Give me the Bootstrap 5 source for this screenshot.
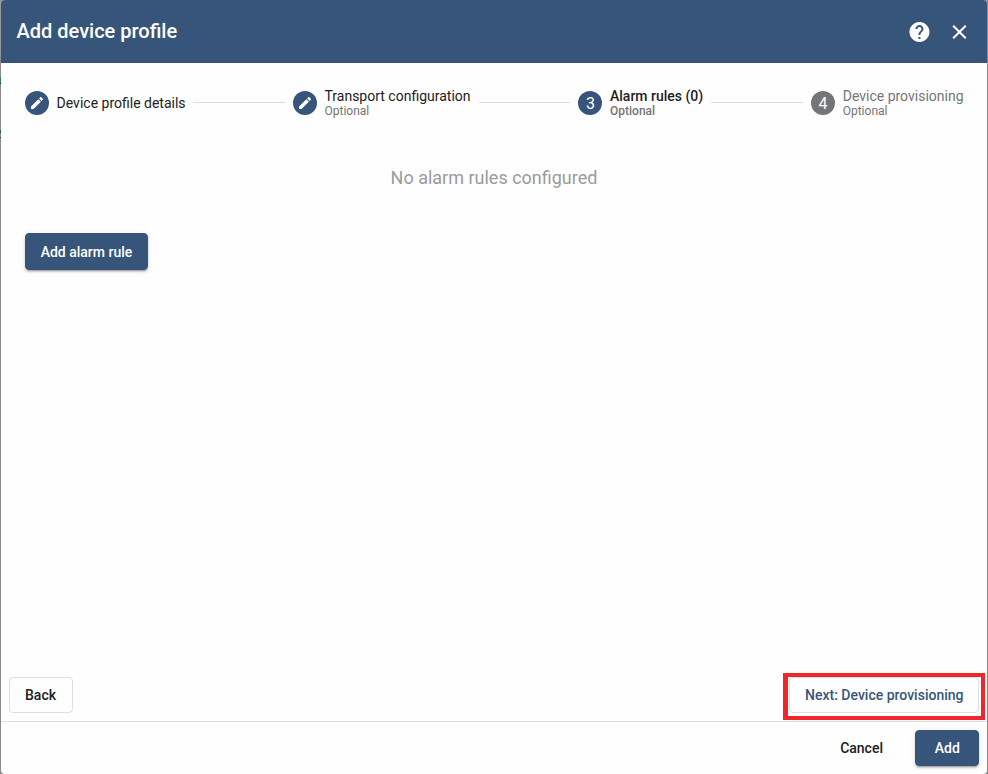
<!DOCTYPE html>
<html lang="en">
<head>
<meta charset="utf-8">
<meta name="viewport" content="width=device-width, initial-scale=1">
<title>Add device profile</title>
<link href="https://cdn.jsdelivr.net/npm/bootstrap@5.3.0/dist/css/bootstrap.min.css" rel="stylesheet">
<style>
  body { font-family: Roboto, "Liberation Sans", sans-serif; color: #212121; font-size: 14px;
    background: linear-gradient(#9a9a9a 0 55px, #8a8a8a 55px 77px, #347b85 77px 83px, #14292c 83px 84px, #8a8a8a 84px 130px, #23568a 130px 133px, #8a8a8a 133px 137px, #333 137px 138px, #8a8a8a 138px) 0 0 / 1px 100% no-repeat #8a8a8a; }
  .dialog { margin: 0 1px; border-radius: 4px; background: #fefefe; overflow: hidden; }
  .dialog-head { height: 63px; background: #37557b; padding: 0 16px 0 15.5px; }
  .dialog-head h1 { font-size: 20px; line-height: 32px; margin-top: -1px; }
  .medium, .dialog-head h1 { font-weight: 500; }
  .head-icons { gap: 16px; }
  .head-icons .btn { line-height: 0; }
  .head-icons svg { transform: translateX(.45px); }
  .stepper { height: 78px; padding: 2px 23.5px 0 24px; }
  .step-dot { width: 24px; height: 24px; background: #37557b; color: #fff; font-size: 16px; line-height: 24px; margin-right: 7.6px; }
  .step-num { padding-top: 1px; }
  .step-dot.idle { background: #757575; }
  .step-name { line-height: 16px; white-space: nowrap; }
  .step-note { font-size: 12px; line-height: 14px; color: #757575; }
  .step-text { margin-bottom: 1px; }
  .muted-name { color: #757575; }
  .step-line { height: 1px; background: #dedede; margin: -1px 8px 0; }
  .step-line.first { margin-left: 7.4px; }
  .empty-note { font-size: 18px; line-height: 27px; color: #9b9b9b; margin-top: 23px; }
  .btn-app { --bs-btn-font-size: 14px; --bs-btn-font-weight: 500; --bs-btn-border-radius: 4px; --bs-btn-padding-y: 0; --bs-btn-padding-x: 15px; --bs-btn-color: #212121; height: 36px; line-height: 34px; white-space: nowrap; }
  .btn-main { --bs-btn-color: #fff; --bs-btn-bg: #37557b; --bs-btn-border-color: #37557b; box-shadow: 0 3px 1px -2px rgba(0,0,0,.2), 0 2px 2px rgba(0,0,0,.14), 0 1px 5px rgba(0,0,0,.12); }
  .btn-line { --bs-btn-border-color: #dedede; }
  .btn-back { width: 64px; padding-left: 14px; }
  .btn-next { --bs-btn-color: #37557b; padding-left: 15.5px; padding-right: 14.5px; }
  .btn-cancel { margin-right: 1px; }
  .btn-add { width: 64px; padding-left: 15.5px; }
  .add-rule { height: 37px; margin: 42px 0 0 24px; width: 123px; line-height: 35px; padding: 1px 14.6px 0; }
  .nav-row { padding: 0 8px 8px; }
  .callout-box { inset: -4px -6px -7px -6px; border: 4px solid #f0262b; border-left-width: 5px; pointer-events: none; }
  .dialog-foot { height: 53px; border-top: 1px solid #dedede; padding: 0 8px; gap: 16px; }
</style>
</head>
<body>
<div class="dialog vh-100 d-flex flex-column">
  <header class="dialog-head d-flex align-items-center justify-content-between text-white">
    <h1 class="mb-0">Add device profile</h1>
    <div class="head-icons d-flex">
      <button type="button" class="btn p-0 border-0" aria-label="Help">
        <svg width="24" height="24" viewBox="0 0 24 24" fill="#fff"><path d="M12 2C6.48 2 2 6.48 2 12s4.48 10 10 10 10-4.48 10-10S17.52 2 12 2zm1 17h-2v-2h2v2zm2.07-7.75l-.9.92C13.45 12.9 13 13.5 13 15h-2v-.5c0-1.1.45-2.1 1.17-2.83l1.24-1.26c.37-.36.59-.86.59-1.41 0-1.1-.9-2-2-2s-2 .9-2 2H8c0-2.21 1.79-4 4-4s4 1.79 4 4c0 .88-.36 1.68-.93 2.25z"/></svg>
      </button>
      <button type="button" class="btn p-0 border-0" aria-label="Close">
        <svg width="24" height="24" viewBox="0 0 24 24" fill="#fff"><path d="M19 6.41L17.59 5 12 10.59 6.41 5 5 6.41 10.59 12 5 17.59 6.41 19 12 13.41 17.59 19 19 17.59 13.41 12z"/></svg>
      </button>
    </div>
  </header>

  <div class="stepper d-flex align-items-center">
    <div class="d-flex align-items-center">
      <span class="step-dot rounded-circle d-flex align-items-center justify-content-center"><svg width="16" height="16" viewBox="0 0 24 24" fill="#fff"><path d="M3 17.25V21h3.750L17.810 9.940l-3.750-3.750L3 17.250zM20.710 7.040c.39-.39.39-1.020 0-1.410l-2.340-2.340c-.39-.39-1.020-.39-1.410 0l-1.830 1.830 3.750 3.750 1.830-1.830z"/></svg></span>
      <div class="step-name">Device profile details</div>
    </div>
    <div class="step-line first flex-fill"></div>
    <div class="d-flex align-items-center">
      <span class="step-dot rounded-circle d-flex align-items-center justify-content-center"><svg width="16" height="16" viewBox="0 0 24 24" fill="#fff"><path d="M3 17.25V21h3.750L17.810 9.940l-3.750-3.750L3 17.250zM20.710 7.040c.39-.39.39-1.020 0-1.410l-2.340-2.340c-.39-.39-1.020-.39-1.410 0l-1.830 1.830 3.750 3.750 1.830-1.830z"/></svg></span>
      <div class="step-text"><div class="step-name">Transport configuration</div><div class="step-note">Optional</div></div>
    </div>
    <div class="step-line flex-fill"></div>
    <div class="d-flex align-items-center">
      <span class="step-dot step-num rounded-circle d-flex align-items-center justify-content-center">3</span>
      <div class="step-text medium"><div class="step-name">Alarm rules (0)</div><div class="step-note">Optional</div></div>
    </div>
    <div class="step-line flex-fill"></div>
    <div class="d-flex align-items-center">
      <span class="step-dot step-num idle rounded-circle d-flex align-items-center justify-content-center">4</span>
      <div class="step-text"><div class="step-name muted-name">Device provisioning</div><div class="step-note">Optional</div></div>
    </div>
  </div>

  <main class="flex-fill">
    <p class="empty-note text-center mb-0">No alarm rules configured</p>
    <button type="button" class="btn btn-app btn-main add-rule">Add alarm rule</button>
  </main>

  <div class="nav-row d-flex justify-content-between">
    <button type="button" class="btn btn-app btn-line btn-back">Back</button>
    <div class="position-relative">
      <button type="button" class="btn btn-app btn-line btn-next">Next: Device provisioning</button>
      <div class="callout-box position-absolute"></div>
    </div>
  </div>

  <footer class="dialog-foot d-flex align-items-center justify-content-end">
    <button type="button" class="btn btn-app border-0 btn-cancel">Cancel</button>
    <button type="button" class="btn btn-app btn-main btn-add">Add</button>
  </footer>
</div>
<script src="https://cdn.jsdelivr.net/npm/bootstrap@5.3.0/dist/js/bootstrap.bundle.min.js"></script>
</body>
</html>
